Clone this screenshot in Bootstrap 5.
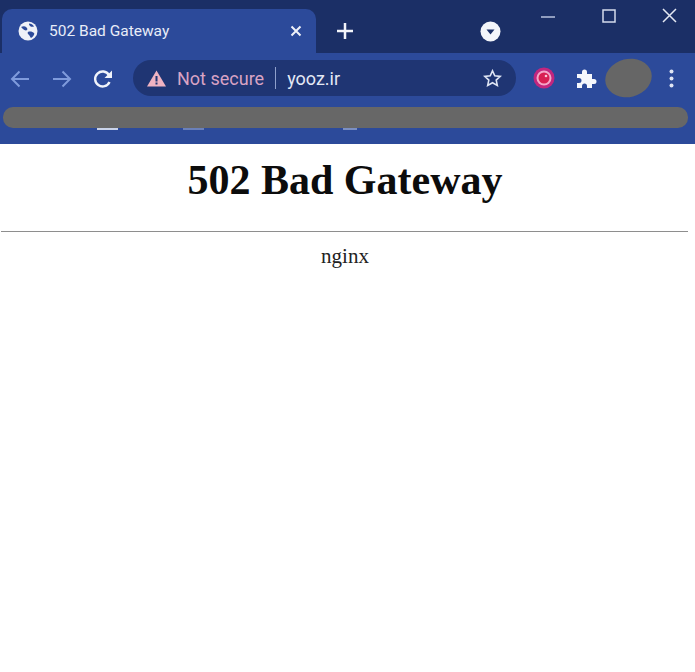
<!DOCTYPE html>
<html lang="en">
<head>
  <meta charset="UTF-8" />
  <title>502 Bad Gateway</title>
  <link href="https://cdn.jsdelivr.net/npm/bootstrap@5.3.0/dist/css/bootstrap.min.css" rel="stylesheet"/>
  <style>
    body {
      background: #fff;
      font-family: "Liberation Serif", serif;
      color: #111;
    }
    .browser-top {
      background: #2c4a9a;
      height: 144px;
      font-family: Roboto, "Liberation Sans", sans-serif;
    }
    .tab-strip {
      height: 53px;
      background: #1b2f66;
      padding-left: 2px;
    }
    .tab-active {
      width: 314px;
      height: 44px;
      margin-top: 9px;
      background: #2c4a9a;
      border-radius: 10px 10px 0 0;
      padding: 0 14px 0 16px;
      color: #e8edf8;
      font-size: 15.5px;
    }
    .tab-title { margin-left: 11px; padding-top: 2px; }
    .tab-new { margin-left: 20px; margin-top: 9px; }
    .tab-search { margin-left: 126px; margin-top: 9px; }
    .win-controls { margin-left: auto; padding-right: 18px; padding-top: 8px; gap: 46px; }
    .tool-row {
      height: 52px;
      padding-left: 9px;
    }
    .nav-arrows { gap: 20px; }
    .omnibox {
      width: 383px;
      height: 36px;
      margin-left: 19px;
      margin-top: -2px;
      background: #1f3573;
      border-radius: 18px;
      padding: 0 14px;
      font-size: 18px;
    }
    .warn-text { color: #d9a3c4; margin-left: 11px; }
    .omni-sep { width: 1px; height: 22px; background: #8fa0cc; margin: 0 11px; }
    .omni-host { color: #e3e8f5; }
    .ext-icons { margin-left: 17px; margin-top: -2px; }
    .ext-puzzle { margin-left: 21px; }
    .avatar-blob {
      width: 47px;
      height: 38px;
      background: #666666;
      border-radius: 50%;
      margin-left: 8px;
      transform: rotate(-14deg);
    }
    .menu-dots { margin-left: 17px; }
    .bookmarks-row { height: 39px; padding: 2px 7px 0 3px; }
    .grey-pill { height: 21px; background: #676767; border-radius: 10px; }
    .bookmark-marks { height: 2px; }
    .bookmark-mark { height: 2px; background: #c9d3ea; }
    .bookmark-mark-a { width: 21px; margin-left: 94px; }
    .bookmark-mark-b { width: 21px; margin-left: 65px; opacity: .4; }
    .bookmark-mark-c { width: 14px; margin-left: 139px; opacity: .5; }
    .error-page { padding-right: 5px; }
    .error-title {
      font-family: "Liberation Serif", serif;
      font-size: 42px;
      font-weight: 700;
      line-height: 46px;
      margin: 13px 0 28px;
      color: #0c0c0c;
    }
    .error-rule {
      margin: 0 2px 0 1px;
      border: 0;
      border-top: 1px solid #8e8e8e;
      opacity: 1;
    }
    .error-server { font-size: 21px; line-height: 24px; margin-top: 12px; color: #222; }
    svg { display: block; flex: none; }
  </style>
</head>
<body>

<div class="browser-top">
  <div class="tab-strip d-flex">
    <div class="tab-active d-flex align-items-center">
      <svg width="20" height="20" viewBox="0 0 20 20">
        <circle cx="10" cy="10" r="9.5" fill="#eef1f8"/>
        <path d="M3 6c2-1 4-1 5 0s2 2 1 3-3 0-4-1-1-1-2-2zM10 11c2-1 5 0 6 1s-1 4-3 5c-1-1-1-2-2-3s-2-2-1-3zM11 2.5c2 0 4 1 5 3-1 .5-3 .5-4-.5s-1-1.500-1-2.500z" fill="#2c4a9a"/>
      </svg>
      <span class="tab-title">502 Bad Gateway</span>
      <svg class="ms-auto" width="12" height="12" viewBox="0 0 12 12">
        <path d="M1.500 1.500l9 9M10.500 1.500l-9 9" stroke="#eef1f8" stroke-width="2"/>
      </svg>
    </div>
    <div class="tab-new d-flex align-items-center">
      <svg width="18" height="18" viewBox="0 0 18 18">
        <path d="M9 1v16M1 9h16" stroke="#f2f4fa" stroke-width="2.500"/>
      </svg>
    </div>
    <div class="tab-search d-flex align-items-center">
      <svg width="21" height="21" viewBox="0 0 21 21">
        <circle cx="10.500" cy="10.500" r="10" fill="#f3f5fa"/>
        <path d="M6.500 8.500h8l-4 5z" fill="#1b2f66"/>
      </svg>
    </div>
    <div class="win-controls d-flex">
      <svg width="15" height="15" viewBox="0 0 15 15">
        <path d="M0 9h14" stroke="#b9c3de" stroke-width="1.500"/>
      </svg>
      <svg width="14" height="15" viewBox="0 0 14 15">
        <rect x="1" y="2" width="12" height="12" fill="none" stroke="#d5dbec" stroke-width="1.500"/>
      </svg>
      <svg width="15" height="15" viewBox="0 0 15 15">
        <path d="M1 1l13 13M14 1L1 14" stroke="#e4e8f3" stroke-width="1.500"/>
      </svg>
    </div>
  </div>

  <div class="tool-row d-flex align-items-center">
    <div class="nav-arrows d-flex">
      <svg width="22" height="20" viewBox="0 0 22 20">
        <path d="M20 10H3M10.500 2.500L3 10l7.500 7.500" fill="none" stroke="#7f9bdc" stroke-width="2"/>
      </svg>
      <svg width="22" height="20" viewBox="0 0 22 20">
        <path d="M2 10h17M11.500 2.500L19 10l-7.500 7.500" fill="none" stroke="#7f9bdc" stroke-width="2"/>
      </svg>
      <svg width="21" height="20" viewBox="0 0 21 20">
        <path d="M16.500 13a7.500 7.500 0 1 1-.5-7" fill="none" stroke="#f0f3fa" stroke-width="2.400"/>
        <path d="M19 1.500V9h-7.500z" fill="#f0f3fa"/>
      </svg>
    </div>
    <div class="omnibox d-flex align-items-center">
      <svg width="19" height="17" viewBox="0 0 19 17">
        <path d="M9.500 0.500L19 16.500H0z" fill="#f0b3c2"/>
        <path d="M8.500 6h2v5.500h-2zM8.500 12.500h2v2h-2z" fill="#1f3573"/>
      </svg>
      <span class="warn-text">Not secure</span>
      <span class="omni-sep"></span>
      <span class="omni-host">yooz.ir</span>
      <svg class="ms-auto" width="19" height="18" viewBox="0 0 19 18">
        <path d="M9.500 1.800l2.300 5 5.400.6-4 3.700 1.100 5.300-4.800-2.700-4.800 2.700 1.100-5.300-4-3.700 5.400-.6z" fill="none" stroke="#dfe5f4" stroke-width="1.600"/>
      </svg>
    </div>
    <div class="ext-icons d-flex align-items-center">
      <svg width="22" height="22" viewBox="0 0 22 22">
        <circle cx="11" cy="11" r="10.500" fill="#c2267e"/>
        <circle cx="11" cy="11" r="7.500" fill="#f4a6c8"/>
        <circle cx="11" cy="11" r="5.500" fill="#d81f52"/>
        <circle cx="13" cy="9" r="1.300" fill="#f7c5d6"/>
      </svg>
      <svg class="ext-puzzle" width="21" height="21" viewBox="0 0 21 21">
        <path d="M1 6h5V4a2.500 2.500 0 0 1 5 0v2h5v5h2a2.500 2.500 0 0 1 0 5h-2v4h-5v-2a2.500 2.500 0 0 0-5 0v2H1v-5h2a2.500 2.500 0 0 0 0-5H1z" fill="#f5f7fc"/>
      </svg>
      <div class="avatar-blob"></div>
      <svg class="menu-dots" width="5" height="19" viewBox="0 0 5 19">
        <circle cx="2.500" cy="2.500" r="2" fill="#dfe5f4"/>
        <circle cx="2.500" cy="9.500" r="2" fill="#dfe5f4"/>
        <circle cx="2.500" cy="16.500" r="2" fill="#dfe5f4"/>
      </svg>
    </div>
  </div>

  <div class="bookmarks-row">
    <div class="grey-pill"></div>
    <div class="bookmark-marks d-flex">
      <span class="bookmark-mark bookmark-mark-a"></span>
      <span class="bookmark-mark bookmark-mark-b"></span>
      <span class="bookmark-mark bookmark-mark-c"></span>
    </div>
  </div>
</div>

<div class="error-page">
  <h1 class="error-title text-center">502 Bad Gateway</h1>
  <hr class="error-rule">
  <div class="error-server text-center">nginx</div>
</div>

<script src="https://cdn.jsdelivr.net/npm/bootstrap@5.3.0/dist/js/bootstrap.bundle.min.js"></script>
</body>
</html>
